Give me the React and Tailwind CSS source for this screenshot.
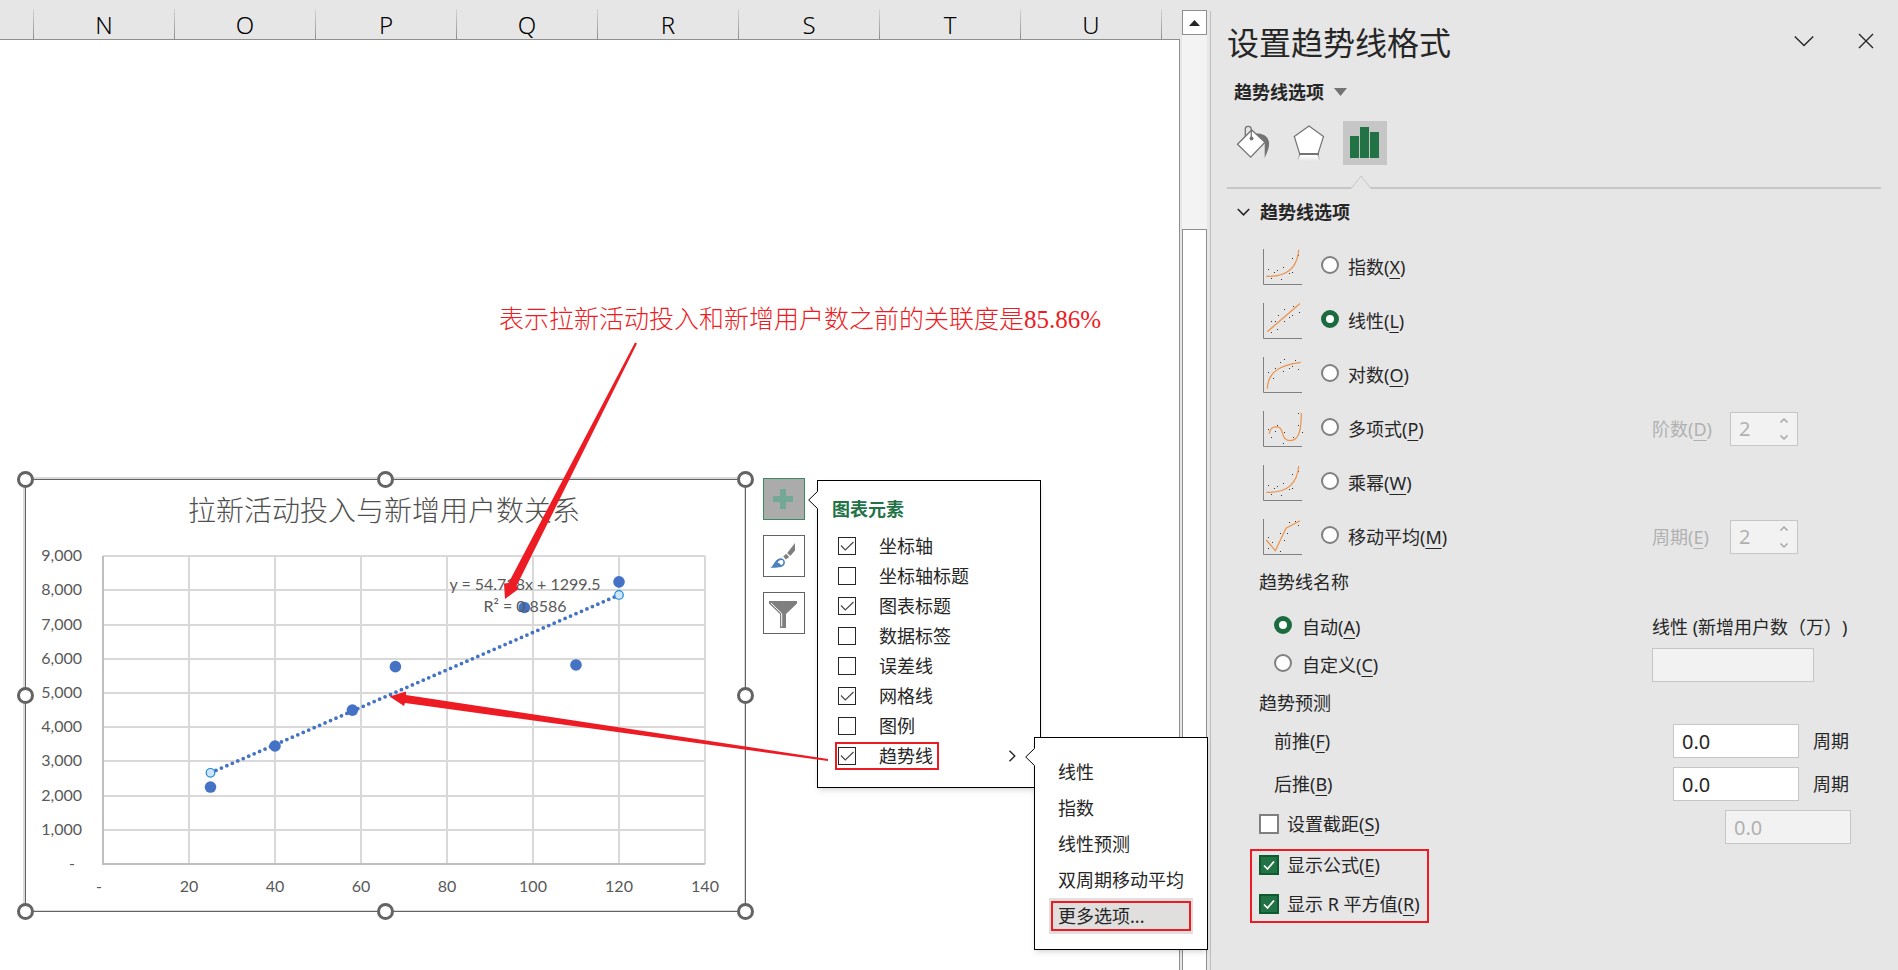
import { useState } from 'react';

const columns = ['N', 'O', 'P', 'Q', 'R', 'S', 'T', 'U'];

const points = [
  [25, 2250],
  [40, 3450],
  [58, 4500],
  [68, 5770],
  [98, 7500],
  [110, 5820],
  [120, 8250],
];

const chartElements = [
  { label: '坐标轴', checked: true },
  { label: '坐标轴标题', checked: false },
  { label: '图表标题', checked: true },
  { label: '数据标签', checked: false },
  { label: '误差线', checked: false },
  { label: '网格线', checked: true },
  { label: '图例', checked: false },
];

const trendMenu = ['线性', '指数', '线性预测', '双周期移动平均'];

const expIcon = {
  d: 'M3.3 27.3C20 28 34 22 35.7 1',
  dots: [[5, 20], [8, 29], [11, 23], [14, 21], [20, 18], [18, 30], [26, 24], [29, 23], [29, 9], [35, 6]],
};

const trendTypes = [
  { id: 'exp', label: '指数', k: 'X', icon: expIcon },
  {
    id: 'linear',
    label: '线性',
    k: 'L',
    icon: {
      d: 'M4.3 28.7L37 .5',
      dots: [[8, 29], [14, 26], [8, 18], [12, 18], [15, 12], [21, 6], [21, 18], [26, 14], [29, 12], [30, 3], [36, 9]],
    },
  },
  {
    id: 'log',
    label: '对数',
    k: 'O',
    icon: {
      d: 'M4.3 31.7C5 14 18 8 37.7 5.3',
      dots: [[5, 15], [10, 21], [12, 11], [17, 5], [21, 2], [20, 14], [26, 11], [29, 9], [32, 3], [35, 12]],
    },
  },
  {
    id: 'poly',
    label: '多项式',
    k: 'P',
    extra: { label: '阶数', k: 'D' },
    icon: {
      d: 'M6.3 22.7C7 14.5 16.5 14 18.5 19.5C20.5 25 21 29.7 27 29.7C35 29.7 38.3 22 38.3 2',
      dots: [[35, 2], [35, 14], [39, 21], [5, 18], [12, 20], [14, 14], [8, 26], [21, 21], [30, 26], [20, 32]],
    },
  },
  { id: 'power', label: '乘幂', k: 'W', icon: expIcon },
  {
    id: 'ma',
    label: '移动平均',
    k: 'M',
    extra: { label: '周期', k: 'E' },
    icon: {
      d: 'M3.3 21L12.3 31.7L23 9.3L37 1.7',
      dots: [[5, 18], [9, 23], [5, 29], [17, 32], [21, 21], [17, 14], [24, 14], [26, 3], [32, 2], [35, 6]],
    },
  },
];

function Mnemonic({ text, k }) {
  return (
    <span>
      {text}(<span className="underline underline-offset-4 decoration-1">{k}</span>)
    </span>
  );
}

function TrendIcon({ icon }) {
  return (
    <svg className="w-10 h-9" viewBox="0 0 40 36" fill="none">
      <path d="M.5 0V35.5H39" stroke="#808080" />
      {icon.dots.map(([x, y]) => (
        <rect key={`${x}-${y}`} x={x} y={y} width="1" height="1" fill="#333" />
      ))}
      <path d={icon.d} stroke="#ed924b" strokeWidth="1.2" />
    </svg>
  );
}

function Radio(props) {
  return (
    <input
      type="radio"
      className="appearance-none w-[18px] h-[18px] mb-1 rounded-full bg-white border-2 border-[#808080] checked:border-[5px] checked:border-[#1b6b3e]"
      {...props}
    />
  );
}

function PaneCheck({ text, k, defaultChecked }) {
  return (
    <label className="flex items-center gap-2 h-7">
      <span className="relative flex">
        <input
          type="checkbox"
          defaultChecked={defaultChecked}
          className="peer appearance-none w-5 h-5 bg-white border-2 border-[#808080] checked:bg-[#217346] checked:border-[#0f5b2f]"
        />
        <svg className="absolute inset-0 w-5 h-5 hidden peer-checked:block pointer-events-none" viewBox="0 0 20 20" fill="none">
          <path d="M5 10.5L8.5 14L15 6.5" stroke="white" strokeWidth="1.7" />
        </svg>
      </span>
      <Mnemonic text={text} k={k} />
    </label>
  );
}

function MenuCheck({ label, checked }) {
  return (
    <label className="flex items-center h-[30px] text-lg">
      <span className="relative flex mr-[23px]">
        <input
          type="checkbox"
          defaultChecked={checked}
          className="peer appearance-none w-[18px] h-[18px] bg-white border border-[#262626]"
        />
        <svg className="absolute inset-0 w-[18px] h-[18px] hidden peer-checked:block pointer-events-none" viewBox="0 0 18 18" fill="none">
          <path d="M3 8.5L7.3 13L15.5 5" stroke="#444" strokeWidth="1.1" />
        </svg>
      </span>
      {label}
    </label>
  );
}

function Spinner({ label, k }) {
  return (
    <div className="flex items-center text-[#b1b1b1]">
      <label htmlFor={`spin-${k}`} className="w-[78px]">
        <Mnemonic text={label} k={k} />
      </label>
      <div className="flex w-[68px] h-[34px] bg-[#f2f2f2] border border-[#c6c6c6]">
        <input id={`spin-${k}`} disabled defaultValue="2" className="w-9 pl-2 text-xl" />
        <div className="flex flex-col justify-between ml-auto mr-2 py-1">
          <button disabled aria-label="+">
            <svg className="w-[10px] h-[8px]" viewBox="0 0 10 8" fill="none" stroke="#a6a6a6" strokeWidth="1.5">
              <path d="M1.5 5.5L5 2L8.5 5.5" />
            </svg>
          </button>
          <button disabled aria-label="-">
            <svg className="w-[10px] h-[8px]" viewBox="0 0 10 8" fill="none" stroke="#a6a6a6" strokeWidth="1.5">
              <path d="M1.5 2.5L5 6L8.5 2.5" />
            </svg>
          </button>
        </div>
      </div>
    </div>
  );
}

function Chart() {
  // plot area origin and scale inside the 740x452 drawing
  const px = (x) => 88 + x * 4.3;
  const py = (y) => 395 - (y / 1000) * 34.2;
  const xs = [20, 40, 60, 80, 100, 120, 140];
  const ys = [1000, 2000, 3000, 4000, 5000, 6000, 7000, 8000, 9000];
  return (
    <svg className="w-[740px] h-[452px]" viewBox="0 0 740 452" fontFamily="Lato, 'Noto Sans CJK SC', sans-serif">
      <rect x="9" y="9" width="721" height="433" fill="white" stroke="#d9d9d9" strokeWidth="2" />
      <rect x="10.5" y="10.5" width="720" height="432" fill="none" stroke="#636363" />
      <text x="369" y="52" textAnchor="middle" fontSize="28" className="font-light" fill="#505050">
        拉新活动投入与新增用户数关系
      </text>
      <g stroke="#d9d9d9" strokeWidth="2">
        {ys.map((y) => (
          <line key={y} x1="88" x2="690" y1={Math.round(py(y))} y2={Math.round(py(y))} />
        ))}
        {xs.map((x) => (
          <line key={x} x1={px(x)} x2={px(x)} y1="87" y2="395" />
        ))}
      </g>
      <path d="M88 87V395H690" fill="none" stroke="#bfbfbf" strokeWidth="2" />
      <g fontSize="16" fill="#595959">
        {ys.map((y) => (
          <text key={y} x="67" y={py(y) + 5} textAnchor="end">
            {y.toLocaleString('en-US')}
          </text>
        ))}
        <text x="54" y="400">-</text>
        <text x="81" y="423">-</text>
        {xs.map((x) => (
          <text key={x} x={px(x)} y="423" textAnchor="middle">
            {x}
          </text>
        ))}
      </g>
      <line
        x1={px(25)}
        y1={py(2667)}
        x2={px(120)}
        y2={py(7867)}
        stroke="#4472c4"
        strokeWidth="3.8"
        strokeLinecap="round"
        strokeDasharray="0 5.95"
      />
      {points.map(([x, y]) => (
        <circle key={x} cx={px(x)} cy={py(y)} r="5.8" fill="#4472c4" />
      ))}
      {[[25, 2667], [120, 7867]].map(([x, y]) => (
        <circle key={x} cx={px(x)} cy={py(y)} r="4.3" fill="#d0e6f8" stroke="#1c8ad8" strokeWidth="1.2" />
      ))}
      <g fontSize="16" fill="#595959" textAnchor="middle">
        <text x="510" y="121">y = 54.728x + 1299.5</text>
        <text x="510" y="143">R² = 0.8586</text>
      </g>
      {[10.5, 370.5, 730.5].map((x) =>
        [10.5, 226.5, 442.5].map((y) =>
          x === 370.5 && y === 226.5 ? null : (
            <circle key={`${x}-${y}`} cx={x} cy={y} r="7" fill="white" stroke="#636363" strokeWidth="3" />
          )
        )
      )}
    </svg>
  );
}

function Pointer() {
  return (
    <svg className="w-[10px] h-[18px]" viewBox="0 0 10 18" fill="none">
      <path d="M10 0L.7 9L10 18Z" fill="white" />
      <path d="M9.5 .5L.7 9L9.5 17.5" stroke="black" />
    </svg>
  );
}

export default function App() {
  const [trend, setTrend] = useState('linear');
  const [nameMode, setNameMode] = useState('auto');

  return (
    <div className='flex min-h-screen bg-[#e6e6e6] text-[#262626] font-["Noto_Sans","Noto_Sans_CJK_SC",sans-serif]'>
      {/* Worksheet */}
      <main className="relative flex-1 flex flex-col min-w-0">
        <div className="flex h-10 pt-[9px] border-b border-[#8f8f8f] overflow-hidden">
          <div className="w-[33px] shrink-0" />
          {columns.map((c) => (
            <div key={c} className="flex w-[141px] shrink-0">
              <span className="w-px bg-linear-to-b from-[#d4d4d4] to-[#8f8f8f]" />
              <span className="flex-1 text-center text-2xl leading-8 font-light text-black">{c}</span>
            </div>
          ))}
          <span className="w-px bg-linear-to-b from-[#d4d4d4] to-[#8f8f8f]" />
        </div>
        <div className="flex-1 bg-white border-r border-[#8f8f8f]" />

        {/* Chart object floating on the sheet */}
        <div className="absolute left-[15px] top-[469px]">
          <Chart />
        </div>

        {/* Chart side buttons */}
        <div className="absolute left-[763px] top-[478px] flex flex-col gap-[15px]">
          <button aria-label="图表元素" className="w-[42px] h-[42px] bg-[#ababab] border border-[#3b8c64]">
            <svg className="w-10 h-10" viewBox="1 1 40 40">
              <path d="M17 11H23V18H30V24H23V31H17V24H10V18H17Z" fill="#74a896" />
            </svg>
          </button>
          <button aria-label="图表样式" className="w-[42px] h-[42px] bg-white border border-[#636363]">
            <svg className="w-10 h-10" viewBox="1 1 40 40">
              <path d="M32 8V15.5L27.3 21L24.2 18Z" fill="#7f7f7f" />
              <path d="M23.2 18.8L26.2 22L22.8 24.6L20.3 21.6Z" fill="#7f7f7f" />
              <path d="M7.3 32.7C10.5 31.5 11.5 24.5 17 23.2C20 22.8 22.6 25.4 21.8 28.5C20.5 32.5 16 32.8 7.3 32.7Z" fill="#4a82bd" />
              <path d="M14.5 28.2C15.5 24.8 19.5 24 20.3 26.5C20.9 29 18 31 17.3 29.3C16.8 28 15.5 27.8 14.5 28.2Z" fill="white" />
            </svg>
          </button>
          <button aria-label="图表筛选器" className="w-[42px] h-[42px] bg-white border border-[#636363]">
            <svg className="w-10 h-10" viewBox="1 1 40 40">
              <path d="M6 9H34V11.5L23 22V36H17V22L6 11.5Z" fill="#7f7f7f" />
              <path d="M8 11L18.7 21.5V34.5" fill="none" stroke="white" strokeWidth="1" />
            </svg>
          </button>
        </div>

        {/* Chart elements popup */}
        <div className="absolute left-[817px] top-[480px] z-10 w-[224px] pt-3 pb-4 pl-5 bg-white border border-black shadow-md">
          <div className="absolute -left-[10px] top-[10px] flex">
            <Pointer />
          </div>
          <h3 className="-ml-1.5 mb-1.5 text-lg leading-8 font-bold text-[#217346]">图表元素</h3>
          {chartElements.map((e) => (
            <MenuCheck key={e.label} {...e} />
          ))}
          <div className="flex items-center justify-between h-[30px] pr-6">
            <div className="-ml-[3px] pr-1 border-2 border-[#ed1c24] h-7 flex items-center pl-px">
              <MenuCheck label="趋势线" checked />
            </div>
            <svg className="w-2 h-3" viewBox="0 0 8 12" fill="none">
              <path d="M1.5 .8L6.8 6L1.5 11.2" stroke="#262626" strokeWidth="1.4" />
            </svg>
          </div>
        </div>

        {/* Trendline submenu */}
        <div className="absolute left-[1034px] top-[737px] z-20 w-[174px] px-[14px] pt-4 pb-[15px] bg-white border border-black shadow-md">
          <div className="absolute -left-[10px] top-[10px] flex">
            <Pointer />
          </div>
          <div className="flex flex-col text-lg">
            {trendMenu.map((t) => (
              <button key={t} className="h-9 pl-[9px] text-left whitespace-nowrap">
                {t}
              </button>
            ))}
            <button className="h-9 px-0.5 bg-[#e1dfdd]">
              <span className="flex items-center h-[30px] pl-[5px] border-2 border-[#ed1c24]">更多选项...</span>
            </button>
          </div>
        </div>

        {/* Annotation */}
        <p className='absolute left-[499px] top-[302px] text-[25px] leading-9 text-[#ed1c24] whitespace-nowrap font-["Liberation_Serif","Noto_Sans_CJK_SC",serif]'>
          <span className="font-light">表示拉新活动投入和新增用户数之前的关联度是</span>85.86%
        </p>
        <svg className="absolute left-0 top-0 z-10 w-[840px] h-[780px] pointer-events-none" viewBox="0 0 840 780" fill="#ed1c24">
          <path d="M635 342.5L637 343.5L516.5 586L518.5 589L505 599L504 583.5L508.5 583Z" />
          <path d="M828 759L828 761L405 703L404 706L389.5 696.5L406 691.5L406 695Z" />
        </svg>
      </main>

      {/* Vertical scrollbar */}
      <div className="flex flex-col w-[25px] ml-0.5 mr-[3px] mt-2.5 bg-[#f3f3f3]">
        <button aria-label="向上滚动" className="flex items-center justify-center h-[25px] bg-white border border-[#8f8f8f]">
          <svg className="w-[11px] h-[6px]" viewBox="0 0 11 6">
            <path d="M5.5 0L11 6H0Z" fill="#262626" />
          </svg>
        </button>
        <div className="flex-1 mt-[194px] bg-white border border-b-0 border-[#8f8f8f]" />
      </div>

      {/* Format pane */}
      <aside className="w-[688px] shrink-0 mt-[11px] pl-4 pr-[17px] border-l border-[#bebebe] text-lg">
        <header className="flex items-center h-[54px] mt-[5px]">
          <h1 className="text-[32px] leading-10">设置趋势线格式</h1>
          <button aria-label="任务窗格选项" className="ml-auto mb-1">
            <svg className="w-5 h-4" viewBox="0 0 20 16" fill="none" stroke="#262626" strokeWidth="1.4">
              <path d="M.8 3.5L10 12.5L19.2 3.5" />
            </svg>
          </button>
          <button aria-label="关闭" className="ml-11 mr-[7px] mb-1">
            <svg className="w-4 h-4" viewBox="0 0 16 16" fill="none" stroke="#262626" strokeWidth="1.4">
              <path d="M1 1L15 15M15 1L1 15" />
            </svg>
          </button>
        </header>
        <button className="flex items-center gap-2.5 h-6 mt-2.5 ml-[7px] font-bold">
          趋势线选项
          <svg className="w-[13px] h-[8px]" viewBox="0 0 13 8">
            <path d="M0 0H13L6.5 8Z" fill="#737373" />
          </svg>
        </button>

        <div className="flex gap-3 mt-[17px] ml-1">
          <button aria-label="填充与线条" className="w-11 h-11">
            <svg viewBox="0 0 44 44">
              <path d="M24.5 12.5C31 12 37 14.5 38 21C38.6 26 36.5 31 33.7 37V22Z" fill="#737373" />
              <path d="M6.5 23.3L20.7 9L34 21.2L19.7 36.2Z" fill="white" stroke="#737373" strokeWidth="1.3" />
              <path d="M14.3 15.5V8C14.3 4.4 19.8 4.4 20.3 8V17" fill="none" stroke="#737373" strokeWidth="1.3" />
              <circle cx="20.5" cy="17.5" r="2" fill="#737373" />
            </svg>
          </button>
          <button aria-label="效果" className="w-11 h-11">
            <svg viewBox="0 0 44 44">
              <defs>
                <linearGradient id="fade" x1="0" y1="0" x2="0" y2="1">
                  <stop offset="0" stopColor="#ffffff" />
                  <stop offset="1" stopColor="#ffffff" stopOpacity="0" />
                </linearGradient>
                <linearGradient id="fadeLine" x1="0" y1="33" x2="0" y2="40" gradientUnits="userSpaceOnUse">
                  <stop offset="0" stopColor="#737373" />
                  <stop offset="1" stopColor="#737373" stopOpacity="0" />
                </linearGradient>
              </defs>
              <path d="M12.5 34H31L33 40H10.5Z" fill="url(#fade)" />
              <path d="M12.5 34L10.8 39.5M31 34L32.8 39.5" stroke="url(#fadeLine)" />
              <path d="M22 5L36.5 15.5L31 33H12.7L7.3 15.5Z" fill="white" stroke="#737373" strokeWidth="1.2" />
              <path d="M12 33H32" stroke="#737373" strokeWidth="2" />
            </svg>
          </button>
          <button aria-label="趋势线选项" className="w-11 h-11 bg-[#c6c6c6]">
            <svg viewBox="0 0 44 44" fill="#217346">
              <path d="M7 15H16V37H7ZM17 6H26V37H17ZM27 11H36V37H27Z" />
            </svg>
          </button>
        </div>

        <div className="relative h-0.5 mt-[22px] bg-[#c6c6c6]">
          <svg className="absolute bottom-0 left-[124px] w-5 h-[14px]" viewBox="0 0 20 14" fill="#e6e6e6">
            <path d="M0 14L10 1L20 14Z" />
            <path d="M.5 13L10 1L19.5 13" fill="none" stroke="#c6c6c6" />
          </svg>
        </div>

        <h2 className="h-[46px] ml-2.5">
          <button className="flex items-center gap-2.5 h-full font-bold">
            <svg className="w-[13px] h-[8px]" viewBox="0 0 13 8" fill="none">
              <path d="M.8 1L6.5 6.8L12.2 1" stroke="#262626" strokeWidth="1.6" />
            </svg>
            趋势线选项
          </button>
        </h2>

        <div className="mt-[5px] ml-9">
          {trendTypes.map((t) => (
            <div key={t.id} className="flex items-center h-[54px]">
              <label className="flex items-center">
                <TrendIcon icon={t.icon} />
                <span className="flex items-center gap-[9px] ml-[18px]">
                  <Radio name="trend" checked={trend === t.id} onChange={() => setTrend(t.id)} />
                  <Mnemonic text={t.label} k={t.k} />
                </span>
              </label>
              {t.extra && (
                <div className="ml-auto w-[229px]">
                  <Spinner {...t.extra} />
                </div>
              )}
            </div>
          ))}
        </div>

        <div className="ml-8">
          <h3 className="leading-9">趋势线名称</h3>
          <div className="mt-2 ml-[15px]">
            <div className="flex items-center h-[38px]">
              <label className="flex items-center gap-2.5">
                <Radio name="tname" checked={nameMode === 'auto'} onChange={() => setNameMode('auto')} />
                <Mnemonic text="自动" k="A" />
              </label>
              <span className="ml-auto w-[229px] whitespace-nowrap [text-spacing-trim:space-all]">线性 (新增用户数（万）)</span>
            </div>
            <div className="flex items-center h-[38px]">
              <label className="flex items-center gap-2.5">
                <Radio name="tname" checked={nameMode === 'custom'} onChange={() => setNameMode('custom')} />
                <Mnemonic text="自定义" k="C" />
              </label>
              <div className="ml-auto w-[229px] flex">
                <input aria-label="自定义名称" disabled className="w-[162px] h-[34px] bg-[#f2f2f2] border border-[#c6c6c6]" />
              </div>
            </div>
          </div>

          <h3 className="leading-[38px]">趋势预测</h3>
          <div className="flex flex-col gap-[9px] mt-0.5">
            {[['前推', 'F'], ['后推', 'B']].map(([text, k]) => (
              <div key={k} className="flex items-center h-[34px] ml-[15px]">
                <label htmlFor={`f-${k}`}>
                  <Mnemonic text={text} k={k} />
                </label>
                <input
                  id={`f-${k}`}
                  defaultValue="0.0"
                  className="ml-auto w-[126px] h-[34px] pl-2 text-xl bg-white border border-[#c6c6c6]"
                />
                <span className="ml-[14px] mr-8">周期</span>
              </div>
            ))}
            <div className="flex items-start h-[34px]">
              <PaneCheck text="设置截距" k="S" />
              <input
                aria-label="截距"
                disabled
                defaultValue="0.0"
                className="ml-auto mr-[30px] w-[126px] h-[34px] pl-2 text-xl text-[#b1b1b1] bg-[#f2f2f2] border border-[#c6c6c6]"
              />
            </div>
          </div>

          <div className="flex flex-col gap-[11px] w-[179px] mt-[5px] -ml-[9px] pl-[7px] pb-[3px] whitespace-nowrap border-2 border-[#ed1c24]">
            <PaneCheck text="显示公式" k="E" defaultChecked />
            <PaneCheck text="显示 R 平方值" k="R" defaultChecked />
          </div>
        </div>
      </aside>
    </div>
  );
}
